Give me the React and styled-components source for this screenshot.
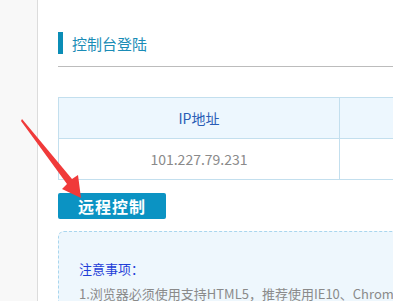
import React from "react";
import styled, { createGlobalStyle } from "styled-components";

const GlobalStyle = createGlobalStyle`
  html, body {
    margin: 0;
    padding: 0;
    background: #fff;
    overflow: hidden;
    font-family: "Noto Sans CJK SC", "Noto Sans", sans-serif;
  }
`;

const Page = styled.div`
  position: relative;
  display: flex;
  width: 393px;
  height: 301px;
  overflow: hidden;
`;

const Sidebar = styled.div`
  flex: 0 0 37px;
  background: #f8f8f8;
  border-right: 1px solid #dcdcdc;
`;

const Main = styled.div`
  flex: 0 0 auto;
  width: 640px;
  padding: 32px 0 0 20px;
`;

const TitleRow = styled.div`
  display: flex;
  align-items: center;
  height: 22px;
  border-left: 5px solid #0b8db6;
  padding-left: 9px;
  font-size: 15px;
  color: #1a8cb6;
`;

const Divider = styled.div`
  height: 1px;
  background: #bcbcbc;
  margin-top: 12px;
`;

const Table = styled.div`
  margin-top: 30px;
  display: grid;
  grid-template-columns: 281px 1fr;
  border-top: 1px solid #c3dfee;
  border-left: 1px solid #c3dfee;
`;

const Cell = styled.div`
  height: 40px;
  display: flex;
  align-items: center;
  justify-content: center;
  border-right: 1px solid #c3dfee;
  border-bottom: 1px solid #c3dfee;
  background: ${(p) => (p.$head ? "#edf7fe" : "#fff")};
  color: ${(p) => (p.$head ? "#2a5db5" : "#8a8a8a")};
  font-size: 14px;
`;

const Button = styled.button`
  margin-top: 13px;
  width: 108px;
  height: 26px;
  border: none;
  border-radius: 2px;
  background: #0b93c3;
  color: #fff;
  font-family: inherit;
  font-size: 16px;
  font-weight: 700;
  letter-spacing: 1px;
  display: flex;
  align-items: center;
  justify-content: center;
  padding: 0;
`;

const Notice = styled.div`
  margin-top: 12px;
  border: 1px dashed #a9d6ee;
  border-radius: 6px;
  background: #eef7fd;
  padding: 27px 20px 20px 20px;
  height: 120px;
`;

const NoticeTitle = styled.div`
  color: #1f3ed8;
  font-size: 13px;
  line-height: 20px;
`;

const NoticeLine = styled.div`
  color: #8a8a8a;
  font-size: 13px;
  line-height: 20px;
  margin-top: 5px;
  white-space: nowrap;
`;

const Arrow = styled.svg`
  position: absolute;
  left: 0;
  top: 0;
  pointer-events: none;
`;

export default function App() {
  return (
    <>
      <GlobalStyle />
      <Page>
        <Sidebar />
        <Main>
          <TitleRow>控制台登陆</TitleRow>
          <Divider />
          <Table>
            <Cell $head>IP地址</Cell>
            <Cell $head />
            <Cell>101.227.79.231</Cell>
            <Cell />
          </Table>
          <Button>远程控制</Button>
          <Notice>
            <NoticeTitle>注意事项：</NoticeTitle>
            <NoticeLine>1.浏览器必须使用支持HTML5，推荐使用IE10、Chrome、Firefox</NoticeLine>
          </Notice>
        </Main>
        <Arrow width="393" height="301" viewBox="0 0 393 301">
          <polygon
            points="22,119 72,179 78,175 81,198 62,189 67,184 21,121"
            fill="#f03a3a"
          />
        </Arrow>
      </Page>
    </>
  );
}
